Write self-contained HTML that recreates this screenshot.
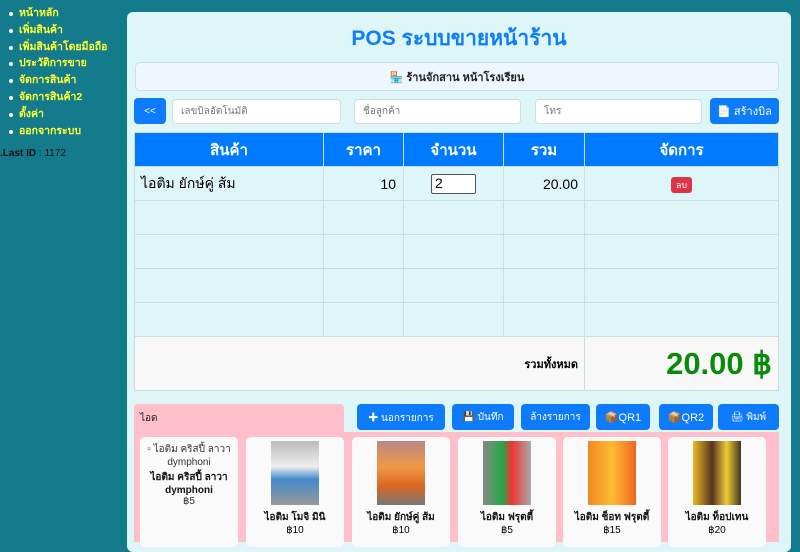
<!DOCTYPE html><html><head><meta charset="utf-8"><style>
*{box-sizing:border-box;margin:0;padding:0}
body{width:800px;height:534px;overflow:hidden;background:#137b8c;font-family:"Liberation Sans","Noto Sans CJK SC",sans-serif;position:relative}
.a{position:absolute}
ul{position:absolute;left:6px;top:5px;list-style:none}
li{color:#ffff33;font-size:10.5px;font-weight:bold;height:16.8px;line-height:16.8px;padding-left:13px;position:relative}
li:before{content:"";position:absolute;left:3px;top:7px;width:4px;height:4px;border-radius:50%;background:#fff}
.card{left:127px;top:12px;width:664px;height:540px;background:#def6f8;border-radius:6px}
.btn{position:absolute;background:#0d7bfb;color:#fff;border-radius:4px;font-size:11px;display:flex;align-items:center;justify-content:center;gap:3px}
.inp{position:absolute;background:#fff;border:1px solid #d6dde2;border-radius:4px;font-size:10px;color:#777;padding-left:8px;display:flex;align-items:center}
table{position:absolute;left:134px;top:132px;width:645px;border-collapse:collapse;font-size:14px}
td,th{border:1px solid #c9dede}
th{background:#007bff;color:#fff;height:34px;font-size:15px}
td{height:34px;background:#dff6f8}
.prod{position:absolute;top:437px;width:98px;height:110px;background:#fafafa;border-radius:5px;text-align:center;font-size:10px}
.prod .im{width:48px;height:64px;margin:4px auto 5px;background:linear-gradient(#b88,#e94 40%,#d62 70%,#777)}
.prod b{display:block;color:#111}
</style></head><body>
<ul><li>หน้าหลัก</li><li>เพิ่มสินค้า</li><li>เพิ่มสินค้าโดยมือถือ</li><li>ประวัติการขาย</li><li>จัดการสินค้า</li><li>จัดการสินค้า2</li><li>ตั้งค่า</li><li>ออกจากระบบ</li></ul>
<div class="a" style="left:0;top:148px;font-size:10px;color:#111"><b>.Last ID</b> : 1172</div>
<div class="a card"></div>
<div class="a" style="left:127px;top:22px;width:664px;text-align:center;color:#0d7dfc;font-size:21px;font-weight:bold">POS ระบบขายหน้าร้าน</div>
<div class="a" style="left:135px;top:62px;width:644px;height:29px;background:#eef7fd;border:1px solid #cfdde5;border-radius:5px;font-size:11px;font-weight:bold;color:#222;display:flex;align-items:center;justify-content:center">🏪 ร้านจักสาน หน้าโรงเรียน</div>
<div class="btn" style="left:134px;top:98px;width:32px;height:26px;font-size:10px">&lt;&lt;</div>
<div class="inp" style="left:172px;top:99px;width:169px;height:25px">เลขบิลอัตโนมัติ</div>
<div class="inp" style="left:354px;top:99px;width:167px;height:25px">ชื่อลูกค้า</div>
<div class="inp" style="left:535px;top:99px;width:167px;height:25px">โทร</div>
<div class="btn" style="left:710px;top:98px;width:69px;height:26px">📄 สร้างบิล</div>
<table>
<tr><th style="width:189px">สินค้า</th><th style="width:80px">ราคา</th><th style="width:100px">จำนวน</th><th style="width:81px">รวม</th><th>จัดการ</th></tr>
<tr><td style="padding-left:6px">ไอติม ยักษ์คู่ ส้ม</td><td style="text-align:right;padding-right:7px">10</td><td style="text-align:center"><span style="display:inline-block;width:45px;height:20px;border:1px solid #555;background:#fff;text-align:left;padding-left:3px;border-radius:2px">2</span></td><td style="text-align:right;padding-right:6px">20.00</td><td style="text-align:center"><span style="background:#dc3545;color:#fff;font-size:9px;padding:3px 5px;border-radius:3px">ลบ</span></td></tr>
<tr><td></td><td></td><td></td><td></td><td></td></tr>
<tr><td></td><td></td><td></td><td></td><td></td></tr>
<tr><td></td><td></td><td></td><td></td><td></td></tr>
<tr><td></td><td></td><td></td><td></td><td></td></tr>
<tr><td colspan="4" style="height:54px;background:#f8f8f8;text-align:right;padding-right:6px;font-size:11px;font-weight:bold">รวมทั้งหมด</td><td style="background:#f8f8f8;text-align:right;padding-right:6px;color:#0a8a0a;font-size:31px;font-weight:bold">20.00 ฿</td></tr>
</table>
<div class="a" style="left:134px;top:404px;width:210px;height:28px;background:#ffc0cb;border-radius:4px 4px 0 0;font-size:10px;padding:7px 6px;color:#222">ไอด</div>
<div class="btn" style="left:357px;top:404px;width:88px;height:26px;font-size:10px">✚ นอกรายการ</div>
<div class="btn" style="left:452px;top:404px;width:62px;height:26px;font-size:10px">💾 บันทึก</div>
<div class="btn" style="left:521px;top:404px;width:69px;height:26px;font-size:10px">ล้างรายการ</div>
<div class="btn" style="left:596px;top:404px;width:54px;height:26px">📦QR1</div>
<div class="btn" style="left:659px;top:404px;width:54px;height:26px">📦QR2</div>
<div class="btn" style="left:718px;top:404px;width:61px;height:26px;font-size:10px">🖨 พิมพ์</div>
<div class="a" style="left:134px;top:432px;width:645px;height:110px;background:#ffc0cb"></div>
<div class="prod" style="left:140px;padding-top:5px;color:#333">▫ ไอติม คริสปี้ ลาวา dymphoni<b style="margin-top:2px">ไอติม คริสปี้ ลาวา dymphoni</b>฿5</div>
<div class="prod" style="left:246px"><div class="im" style="background:linear-gradient(#bbb,#eee 40%,#48c 60%,#999)"></div><b>ไอติม โมจิ มินิ</b>฿10</div>
<div class="prod" style="left:352px"><div class="im"></div><b>ไอติม ยักษ์คู่ ส้ม</b>฿10</div>
<div class="prod" style="left:458px"><div class="im" style="background:linear-gradient(90deg,#888,#2a4 40%,#e33 60%,#aaa)"></div><b>ไอติม ฟรุตตี้</b>฿5</div>
<div class="prod" style="left:563px"><div class="im" style="background:linear-gradient(90deg,#e82,#fb3 50%,#e62)"></div><b>ไอติม ช็อท ฟรุตตี้</b>฿15</div>
<div class="prod" style="left:668px"><div class="im" style="background:linear-gradient(90deg,#eb2,#532 40%,#ec3 70%,#432)"></div><b>ไอติม ท็อปเทน</b>฿20</div>
</body></html>
